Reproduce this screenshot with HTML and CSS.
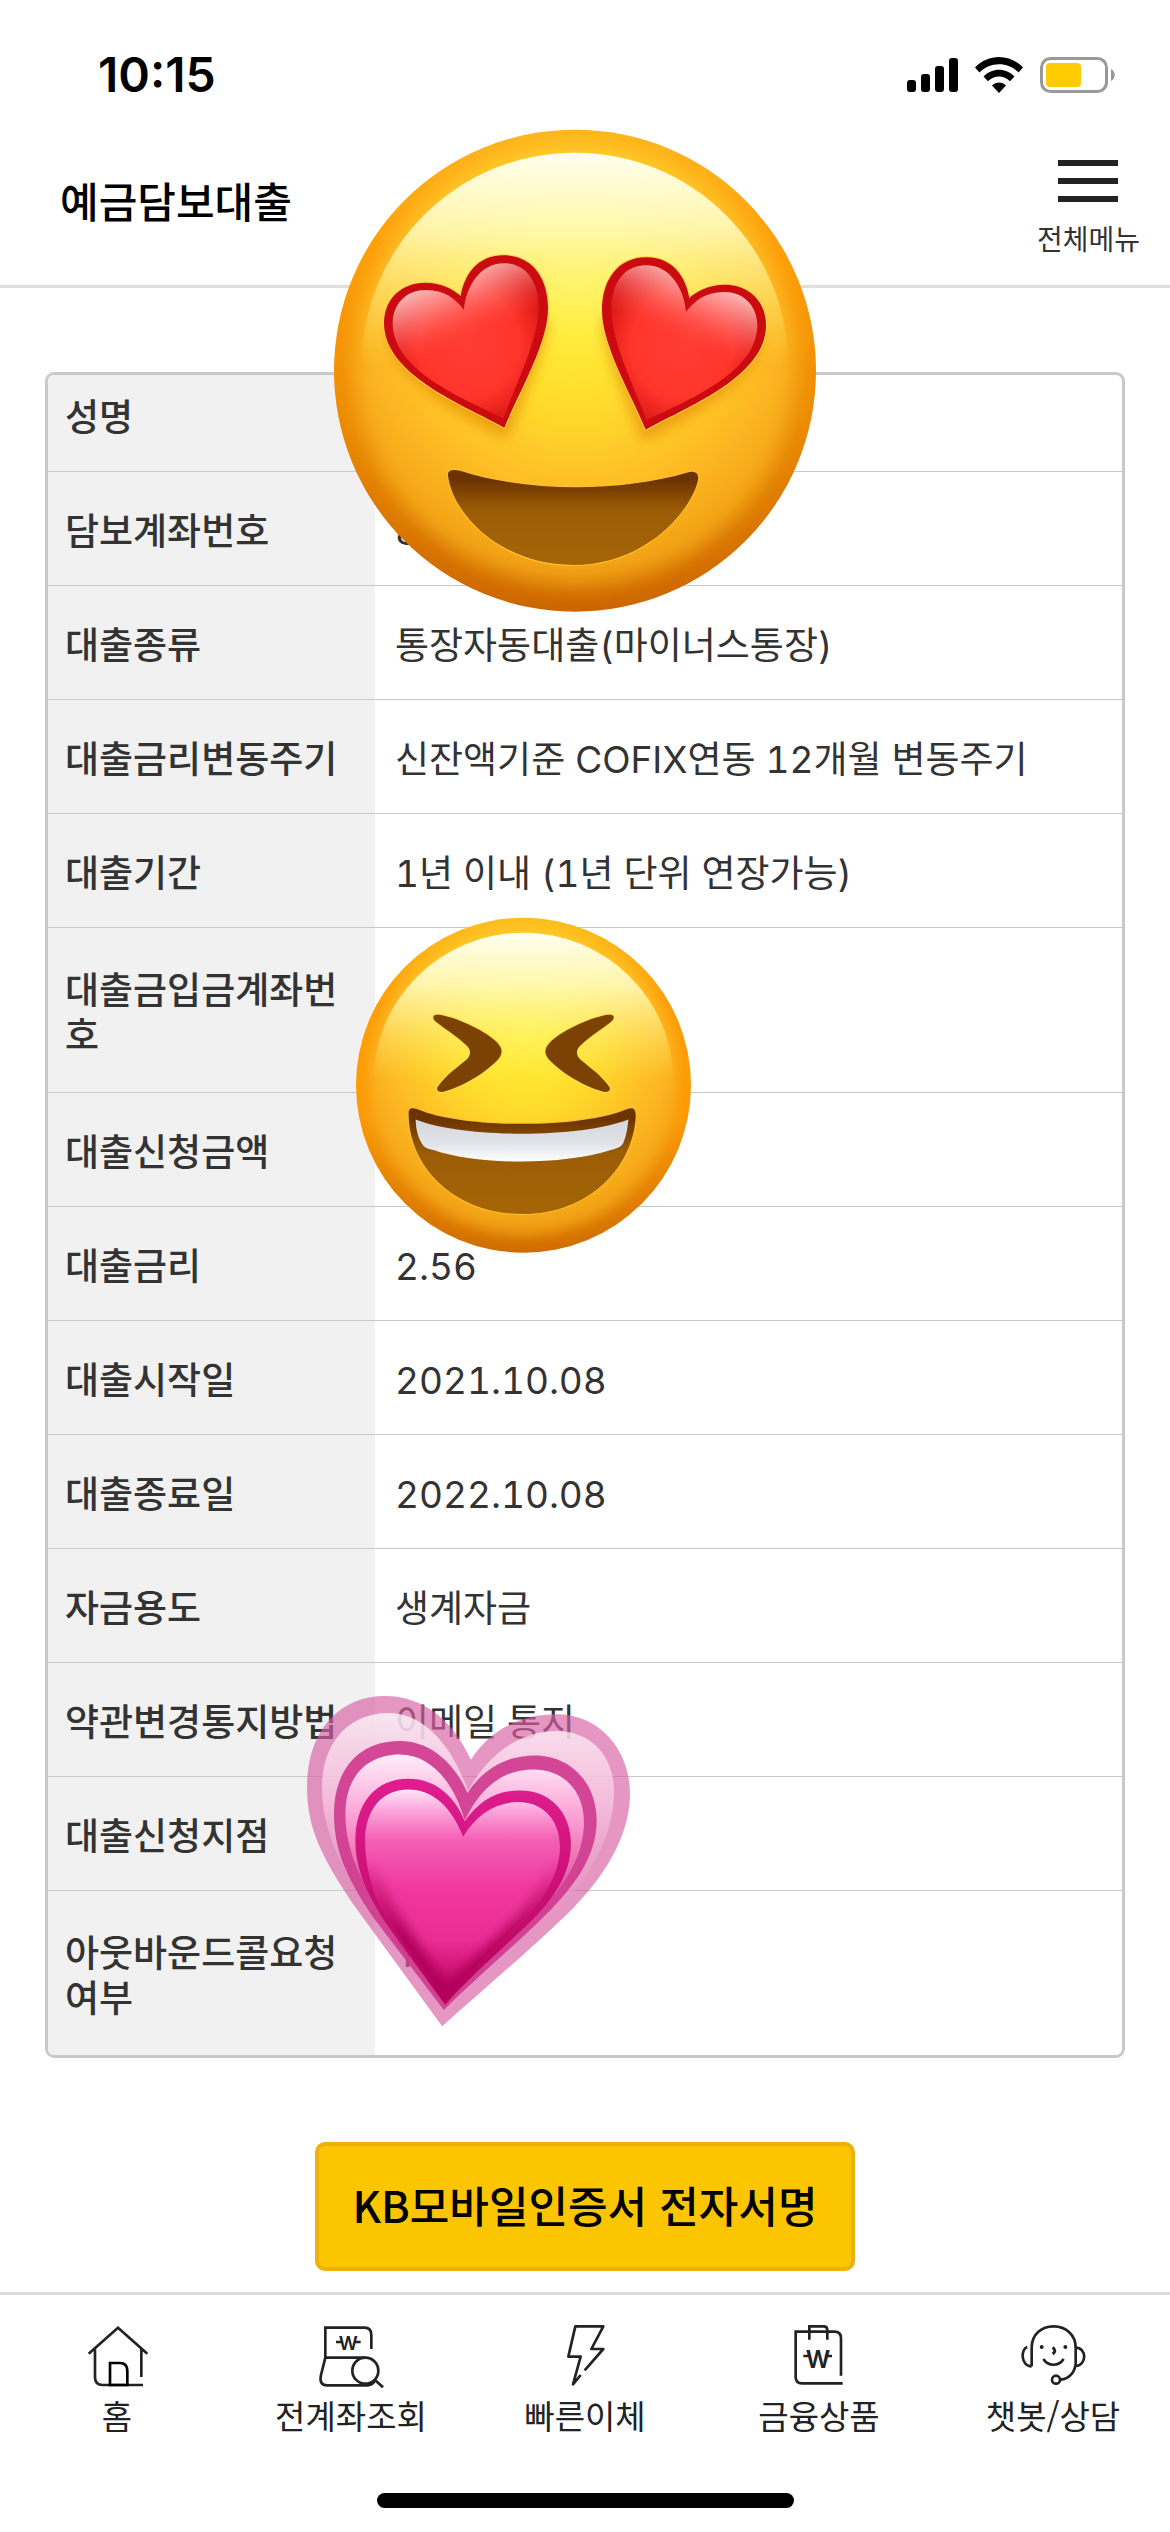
FILE: index.html
```html
<!DOCTYPE html>
<html lang="ko">
<head>
  <meta charset="UTF-8">
  <meta name="viewport" content="width=device-width, initial-scale=1.0">
  <title>예금담보대출</title>
  <link rel="stylesheet" href="styles.css">
</head>
<body>
  <div class="page">
    <div class="status-bar">
      <span class="time">10:15</span>
      <div class="status-icons">
        <svg class="signal" viewBox="0 0 51 34">
          <rect x="0" y="22" width="9" height="12" rx="3"/>
          <rect x="14" y="16" width="9" height="18" rx="3"/>
          <rect x="28" y="8" width="9" height="26" rx="3"/>
          <rect x="42" y="0" width="9" height="34" rx="3"/>
        </svg>
        <svg class="wifi" viewBox="0 0 48 36">
          <path d="M0 10.5C13-3.5 35-3.5 48 10.5L43.500 15.500C33 4.500 15 4.500 4.500 15.500Z"/>
          <path d="M8.500 19.500C17 10.500 31 10.500 39.500 19.500L35 24.300C29 18 19 18 13 24.300Z"/>
          <path d="M17 28.500C21 24.500 27 24.500 31 28.500L24 36Z"/>
        </svg>
        <svg class="battery" viewBox="0 0 76 36">
          <rect x="1.500" y="1.500" width="65" height="33" rx="9" fill="none" stroke="#999" stroke-width="3"/>
          <rect x="6" y="6" width="35" height="24" rx="4" fill="#fecb00"/>
          <path d="M71 12C76 14 76 22 71 24Z" fill="#999"/>
        </svg>
      </div>
    </div>

    <header class="header">
      <h1>예금담보대출</h1>
      <button type="button" class="menu-button">
        <svg viewBox="0 0 60 42"><path d="M0 3H60M0 21H60M0 39H60" stroke="#222" stroke-width="6"/></svg>
        <span>전체메뉴</span>
      </button>
    </header>

    <main class="content">
      <div class="table-box">
        <table class="loan-table">
          <tbody>
            <tr><th scope="row">성명</th><td></td></tr>
            <tr><th scope="row">담보계좌번호</th><td>8</td></tr>
            <tr><th scope="row">대출종류</th><td>통장자동대출(마이너스통장)</td></tr>
            <tr><th scope="row">대출금리변동주기</th><td>신잔액기준 COFIX연동 12개월 변동주기</td></tr>
            <tr><th scope="row">대출기간</th><td>1년 이내 (1년 단위 연장가능)</td></tr>
            <tr class="tall"><th scope="row">대출금입금계좌번호</th><td></td></tr>
            <tr><th scope="row">대출신청금액</th><td></td></tr>
            <tr><th scope="row">대출금리</th><td>2.56</td></tr>
            <tr><th scope="row">대출시작일</th><td>2021.10.08</td></tr>
            <tr><th scope="row">대출종료일</th><td>2022.10.08</td></tr>
            <tr><th scope="row">자금용도</th><td>생계자금</td></tr>
            <tr><th scope="row">약관변경통지방법</th><td>이메일 통지</td></tr>
            <tr><th scope="row">대출신청지점</th><td></td></tr>
            <tr class="tall"><th scope="row">아웃바운드콜요청여부</th><td>Y</td></tr>
          </tbody>
        </table>
      </div>
      <button type="button" class="sign-button">KB모바일인증서 전자서명</button>
    </main>

    <nav class="tab-bar">
      <a href="#home">
        <svg viewBox="36 15 210 210">
          <path d="M56 116L144 38L232 116M75 103V187Q75 210 98 210H219M214 103V186"/>
          <path d="M120 210V144H150Q172 144 172 168V210Z" stroke="#000"/>
        </svg>
        <span>홈</span>
      </a>
      <a href="#accounts">
        <svg viewBox="738 15 210 210">
          <path d="M766 127V38H884Q904 38 904 60V102M886 128H766L753 180Q746 211 772 211H892Q906 211 914 199"/>
          <circle cx="886" cy="167" r="39"/>
          <path d="M914 194L939 217M798 81H816M854 81H872"/>
          <text x="835" y="106" font-size="56">W</text>
        </svg>
        <span>전계좌조회</span>
      </a>
      <a href="#transfer">
        <svg viewBox="120 15 210 210">
          <path stroke-linejoin="round" d="M224 166L280 102H244L280 34H196L175 125H212L189 208L212 180"/>
        </svg>
        <span>빠른이체</span>
      </a>
      <a href="#products">
        <svg viewBox="822 15 210 210">
          <path d="M993 182V70Q993 50 973 50H857V186Q857 205 876 205H998M898 74V34H941Q952 34 952 46V74M880 123H902M945 123H966"/>
          <text x="924" y="158" font-size="72">W</text>
        </svg>
        <span>금융상품</span>
      </a>
      <a href="#chat">
        <svg viewBox="144 15 210 210">
          <path d="M185 154V98C185 58 214 34 251 34C288 34 317 60 317 98V146C315 172 297 192 272 194M172 96C152 101 151 153 185 154M317 98C350 98 352 150 317 153M220 132C235 155 266 155 281 132"/>
          <path d="M248 97Q261 107 248 117" stroke-width="9"/>
          <circle cx="258" cy="194" r="12"/>
          <g fill="#222" stroke="none"><circle cx="215" cy="96" r="6"/><circle cx="286" cy="96" r="6"/></g>
        </svg>
        <span>챗봇/상담</span>
      </a>
    </nav>
    <div class="home-indicator"></div>

    <!-- heart eyes -->
    <svg class="sticker sticker-love" viewBox="42 57 1446 1450">
      <defs>
        <linearGradient id="rim" x1="0" y1="0" x2="0" y2="1">
          <stop offset="0" stop-color="#fdb41c"/>
          <stop offset="0.25" stop-color="#ff9d08"/>
          <stop offset="0.6" stop-color="#ec8b03"/>
          <stop offset="1" stop-color="#cb6600"/>
        </linearGradient>
        <radialGradient id="skin" cx="0.5" cy="0.36" r="0.66">
          <stop offset="0" stop-color="#fff036"/>
          <stop offset="0.35" stop-color="#ffdd2e"/>
          <stop offset="0.7" stop-color="#fdb723"/>
          <stop offset="1" stop-color="#ee9a0e"/>
        </radialGradient>
        <linearGradient id="gloss" x1="0" y1="0" x2="0" y2="1">
          <stop offset="0" stop-color="#fffff0"/>
          <stop offset="0.18" stop-color="#fffcc0" stop-opacity="0.85"/>
          <stop offset="0.5" stop-color="#fff36a" stop-opacity="0"/>
        </linearGradient>
        <linearGradient id="mouth" x1="0" y1="0" x2="0" y2="1">
          <stop offset="0.1" stop-color="#6b3300"/>
          <stop offset="0.42" stop-color="#9b5c06"/>
          <stop offset="1" stop-color="#a56506"/>
        </linearGradient>
        <radialGradient id="heartFill" cx="0.52" cy="0.52" r="0.56">
          <stop offset="0" stop-color="#ff3d33"/>
          <stop offset="0.62" stop-color="#ff352b"/>
          <stop offset="1" stop-color="#d81412"/>
        </radialGradient>
        <linearGradient id="heartShine" x1="0.3" y1="0" x2="0.5" y2="0.5">
          <stop offset="0" stop-color="#fff"/>
          <stop offset="0.45" stop-color="#ffb5b5" stop-opacity="0.6"/>
          <stop offset="1" stop-color="#ff5550" stop-opacity="0"/>
        </linearGradient>
        <filter id="soft" x="-20%" y="-20%" width="140%" height="140%"><feGaussianBlur stdDeviation="30"/></filter>
        <filter id="shade" x="-20%" y="-20%" width="140%" height="140%"><feGaussianBlur stdDeviation="20"/></filter>
        <clipPath id="loveClip"><circle cx="765" cy="782" r="723"/></clipPath>
        <g id="heartEye">
          <path d="M560 985C430 920 205 800 205 660L680 620C680 720 600 880 560 985Z" fill="#e07a00" opacity="0.6" filter="url(#shade)"/>
          <path d="M553 953C430 885 192 795 192 640C192 562 250 518 315 518C365 518 400 538 422 558C432 498 470 436 550 436C640 436 684 508 684 595C684 700 600 840 553 953Z" fill="#cc0b10" stroke="#ffd44a" stroke-width="6" paint-order="stroke"/>
          <path d="M550 925C440 870 218 785 218 640C218 578 262 540 318 540C372 540 405 565 432 600C438 530 480 460 552 460C622 460 656 520 656 592C656 690 585 830 550 925Z" fill="url(#heartFill)"/>
          <path d="M550 925C440 870 218 785 218 640C218 578 262 540 318 540C372 540 405 565 432 600C438 530 480 460 552 460C622 460 656 520 656 592C656 690 585 830 550 925Z" fill="url(#heartShine)"/>
        </g>
      </defs>
      <circle cx="765" cy="782" r="723" fill="url(#rim)"/>
      <g clip-path="url(#loveClip)">
        <circle cx="765" cy="762" r="665" fill="url(#skin)" filter="url(#soft)"/>
      </g>
      <ellipse cx="765" cy="766" rx="640" ry="638" fill="url(#gloss)"/>
      <use href="#heartEye"/>
      <use href="#heartEye" transform="translate(1530 6) scale(-1 1)"/>
      <path d="M384 1095C382 1080 400 1077 420 1082C620 1147 900 1147 1100 1088C1125 1080 1138 1090 1134 1110C1115 1200 980 1365 760 1365C540 1365 396 1210 384 1095Z" fill="url(#mouth)" stroke="#ffc02f" stroke-width="6" paint-order="stroke"/>
    </svg>

    <!-- squinting laugh -->
    <svg class="sticker sticker-laugh" viewBox="77 52 1006 1011">
      <defs>
        <linearGradient id="rimLaugh" x1="0" y1="0" x2="0" y2="1">
          <stop offset="0" stop-color="#fdbd1c"/>
          <stop offset="0.25" stop-color="#ff9d08"/>
          <stop offset="0.6" stop-color="#fb9906"/>
          <stop offset="1" stop-color="#cf6c00"/>
        </linearGradient>
        <linearGradient id="teeth" x1="0" y1="0" x2="0" y2="1">
          <stop offset="0" stop-color="#d3d6dc"/>
          <stop offset="0.6" stop-color="#e2e4e9"/>
          <stop offset="1" stop-color="#fff"/>
        </linearGradient>
        <clipPath id="laughClip"><circle cx="580" cy="557" r="503"/></clipPath>
        <path id="squint" d="M310 350C314 343 330 345 345 349C400 363 470 398 500 428C520 449 518 465 500 484C460 525 390 565 340 577C322 580 315 570 325 558C350 525 380 505 405 484C425 466 424 450 405 434C380 410 340 386 316 366C310 360 308 355 310 350Z"/>
      </defs>
      <circle cx="580" cy="557" r="503" fill="url(#rimLaugh)"/>
      <g clip-path="url(#laughClip)">
        <circle cx="580" cy="543" r="464" fill="url(#skin)" filter="url(#shade)"/>
      </g>
      <ellipse cx="580" cy="545" rx="450" ry="446" fill="url(#gloss)"/>
      <g fill="#7c4203" stroke="#ffe14a" stroke-width="6" paint-order="stroke">
        <use href="#squint"/>
        <use href="#squint" transform="translate(1160 0) scale(-1 1)"/>
      </g>
      <path d="M235 642C234 624 246 624 262 629C400 688 750 688 890 629C910 622 917 628 917 650C910 800 780 944 577 944C370 944 235 800 235 642Z" fill="url(#mouth)" stroke="#ffc02f" stroke-width="6" paint-order="stroke"/>
      <path d="M256 660C400 717 750 717 895 660C892 695 886 715 880 730C873 744 862 746 845 751C700 798 440 798 310 752C290 747 282 745 275 733C262 710 257 690 256 660Z" fill="url(#teeth)"/>
    </svg>

    <!-- growing heart -->
    <svg class="sticker sticker-heart" viewBox="52 77 968 991">
      <defs>
        <linearGradient id="outerLight" x1="0" y1="0" x2="0" y2="1">
          <stop offset="0" stop-color="#fff" stop-opacity="0.75"/>
          <stop offset="0.3" stop-color="#fbcde6" stop-opacity="0.7"/>
          <stop offset="0.8" stop-color="#e48cbb" stop-opacity="0"/>
        </linearGradient>
        <linearGradient id="middleLight" x1="0" y1="0" x2="0" y2="1">
          <stop offset="0" stop-color="#ffeef9"/>
          <stop offset="0.3" stop-color="#fb93cd"/>
          <stop offset="0.8" stop-color="#cc2b82" stop-opacity="0.6"/>
        </linearGradient>
        <linearGradient id="innerLight" x1="0" y1="0" x2="0" y2="1">
          <stop offset="0" stop-color="#ffe6fb"/>
          <stop offset="0.1" stop-color="#fba6dc"/>
          <stop offset="0.24" stop-color="#f55fb5"/>
          <stop offset="0.48" stop-color="#f0389f"/>
          <stop offset="0.72" stop-color="#ea2c94"/>
          <stop offset="1" stop-color="#b8005a"/>
        </linearGradient>
        <linearGradient id="edge" x1="0" y1="0" x2="0" y2="1">
          <stop offset="0" stop-color="#e01e90"/>
          <stop offset="1" stop-color="#b40058"/>
        </linearGradient>
        <linearGradient id="depth" gradientUnits="userSpaceOnUse" x1="0" y1="560" x2="0" y2="800">
          <stop offset="0" stop-color="#b00058" stop-opacity="0"/>
          <stop offset="1" stop-color="#b00058"/>
        </linearGradient>
        <filter id="inner" x="-10%" y="-10%" width="120%" height="120%"><feGaussianBlur stdDeviation="18"/></filter>
        <path id="innerPath" d="M468 985C400 890 320 800 268 700C240 640 226 570 226 510C226 420 275 357 355 357C430 357 485 410 520 499C560 430 620 395 685 395C765 395 810 455 810 530C810 610 760 690 690 760C610 840 530 910 468 985Z"/>
        <clipPath id="innerClip"><use href="#innerPath"/></clipPath>
      </defs>
      <path d="M457 1067L190 700C95 560 52 470 52 350C52 180 150 77 285 77C400 77 490 150 543 268C600 180 690 132 800 132C930 132 1020 240 1020 370C1020 480 960 600 850 712C740 820 600 940 457 1067Z" fill="#d95fa3" opacity="0.66"/>
      <path d="M461 1020L215 680C130 550 97 450 97 350C97 215 180 128 295 128C395 128 480 210 535 362C600 240 700 182 800 182C905 182 972 260 972 360C972 470 930 570 830 690C720 810 600 900 461 1020Z" fill="url(#outerLight)"/>
      <path d="M462 1018L250 740C170 620 133 540 133 430C133 295 210 212 330 212C430 212 500 290 533 368C580 295 650 255 735 255C845 255 920 340 920 450C920 560 850 650 770 730C670 830 570 910 462 1018Z" fill="#cf3b8f" opacity="0.92"/>
      <path d="M466 990L280 730C205 620 167 530 167 430C167 320 230 252 330 252C420 252 490 330 525 450C575 345 645 297 730 297C825 297 882 365 882 455C882 550 830 640 750 720C660 810 560 890 466 990Z" fill="url(#middleLight)"/>
      <path d="M466 1002L290 760C225 660 197 590 197 510C197 395 260 325 355 325C440 325 495 380 525 452C570 390 620 360 690 360C785 360 843 430 843 520C843 610 790 690 710 765C620 850 540 920 466 1002Z" fill="url(#edge)"/>
      <use href="#innerPath" fill="url(#innerLight)"/>
      <g clip-path="url(#innerClip)">
        <path d="M222 560C250 700 380 860 468 985C560 880 780 740 812 560" fill="none" stroke="url(#depth)" stroke-width="60" filter="url(#inner)"/>
      </g>
    </svg>
  </div>
</body>
</html>
```
FILE: styles.css
```css
* {
  box-sizing: border-box;
}
body {
  margin: 0;
  background-color: #fff;
  color: #333;
  font-family: Inter, "Noto Sans CJK KR", sans-serif;
  font-size: 37px;
  line-height: 45px;
}
svg {
  display: block;
}
.page {
  position: relative;
}
.status-bar {
  display: flex;
  justify-content: space-between;
  align-items: center;
  height: 141px;
  padding: 8px 54px 0 98px;
  color: #000;
}
.time {
  font-size: 48px;
  font-weight: 600;
}
.status-icons {
  display: flex;
  align-items: center;
  gap: 17px;
}
.signal {
  width: 51px;
  height: 34px;
}
.wifi {
  width: 48px;
  height: 36px;
}
.battery {
  width: 76px;
  height: 36px;
}
.header {
  display: flex;
  justify-content: space-between;
  align-items: flex-start;
  height: 147px;
  padding: 19px 30px 0 60px;
  border-bottom: 3px solid #dfdfdf;
}
.header h1 {
  margin: 0;
  color: #000;
  font-size: 42px;
  font-weight: 500;
  line-height: 86px;
}
.menu-button {
  display: flex;
  flex-direction: column;
  align-items: center;
  gap: 18px;
  padding: 0;
  border: none;
  background: none;
  color: #333;
  font-family: "Noto Sans CJK KR", sans-serif;
  font-size: 28px;
  line-height: 36px;
}
.menu-button svg {
  width: 60px;
  height: 42px;
}
.content {
  padding: 84px 45px 21px;
}
.table-box {
  overflow: hidden;
  border: 3px solid #c9c9c9;
  border-radius: 9px;
}
.loan-table {
  width: 100%;
  border-collapse: separate;
  border-spacing: 0;
  table-layout: fixed;
  font-variant-numeric: tabular-nums;
}
.loan-table th,
.loan-table td {
  height: 114px;
  padding: 37px 20px 31px;
  border-bottom: 1px solid #c9c9c9;
  text-align: left;
  vertical-align: top;
}
.loan-table th {
  width: 327px;
  padding-right: 10px;
  padding-left: 17px;
  background-color: #f1f1f1;
  font-weight: 500;
  word-break: break-all;
}
.loan-table tr:first-child th,
.loan-table tr:first-child td {
  height: 97px;
  padding-top: 20px;
}
.loan-table .tall th,
.loan-table .tall td {
  height: 165px;
  padding-top: 40px;
}
.loan-table tr:last-child th,
.loan-table tr:last-child td {
  height: 164px;
  border-bottom: none;
}
.sign-button {
  display: block;
  width: 50%;
  min-width: 540px;
  height: 129px;
  margin: 84px auto 0;
  padding: 0 0 6px;
  border: 4px solid #eeb00c;
  border-radius: 10px;
  background-color: #fbc500;
  color: #000;
  font-family: "Noto Sans CJK KR", sans-serif;
  font-size: 43px;
  font-weight: 500;
}
.tab-bar {
  display: grid;
  grid-template-columns: repeat(5, 1fr);
  padding-top: 25px;
  border-top: 3px solid #dcdcdc;
}
.tab-bar a {
  display: flex;
  flex-direction: column;
  align-items: center;
  color: #222;
  font-family: "Noto Sans CJK KR", sans-serif;
  font-size: 33px;
  line-height: 50px;
  text-decoration: none;
}
.tab-bar svg {
  width: 70px;
  height: 70px;
  fill: none;
  stroke: #222;
  stroke-width: 8;
}
.tab-bar text {
  fill: #222;
  stroke: none;
  font-family: Inter, sans-serif;
  font-weight: 600;
  text-anchor: middle;
}
.home-indicator {
  width: 417px;
  height: 15px;
  margin: 53px auto 0;
  border-radius: 8px;
  background-color: #000;
}
/* stickers lie over the page */
.sticker {
  position: absolute;
}
.sticker-love {
  top: 129px;
  left: 334px;
  width: 482px;
}
.sticker-laugh {
  top: 917px;
  left: 356px;
  width: 335px;
}
.sticker-heart {
  top: 1696px;
  left: 307px;
  width: 323px;
}
```
